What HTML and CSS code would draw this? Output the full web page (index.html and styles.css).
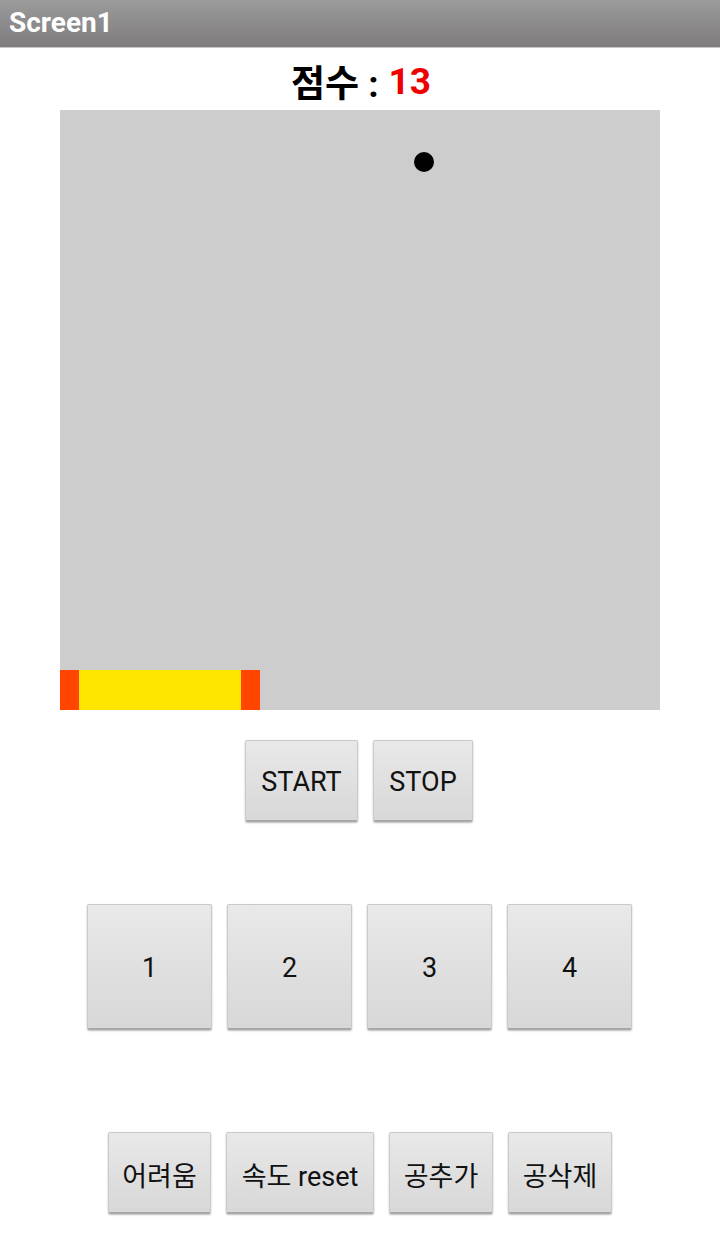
FILE: index.html
```html
<!DOCTYPE html>
<html lang="ko">
<head>
<meta charset="utf-8">
<link rel="stylesheet" href="styles.css">
</head>
<body>
<header class="titlebar"><span class="title">Screen1</span></header>
<main class="screen">
  <div class="score">점수 : <span class="score-num">13</span></div>
  <div class="canvas">
    <div class="ball"></div>
    <div class="paddle"><span class="pend"></span><span class="pmid"></span><span class="pend"></span></div>
  </div>
  <div class="row row-ctrl">
    <button class="btn btn-start">START</button>
    <button class="btn btn-stop">STOP</button>
  </div>
  <div class="row row-num">
    <button class="btn btn-num">1</button>
    <button class="btn btn-num">2</button>
    <button class="btn btn-num">3</button>
    <button class="btn btn-num">4</button>
  </div>
  <div class="row row-opt">
    <button class="btn btn-hard">어려움</button>
    <button class="btn btn-reset">속도 reset</button>
    <button class="btn btn-add">공추가</button>
    <button class="btn btn-del">공삭제</button>
  </div>
</main>
</body>
</html>
```
FILE: styles.css
```css
* { box-sizing: border-box; }
html, body { margin: 0; padding: 0; }
body {
  width: 720px;
  height: 1250px;
  background: #ffffff;
  font-family: Roboto, "Noto Sans CJK KR", sans-serif;
  overflow: hidden;
}
.titlebar {
  height: 48px;
  background: linear-gradient(#9c9b9b, #7e7c7c);
  display: flex;
  align-items: center;
  padding-left: 9px;
  border-bottom: 1px solid #c8c8c8;
}
.title {
  color: #ffffff;
  font-weight: 700;
  font-size: 28px;
  font-family: Roboto, sans-serif;
  margin-top: -2px;
}
.screen {
  display: flex;
  flex-direction: column;
  align-items: center;
}
.score {
  height: 62px;
  display: flex;
  align-items: center;
  justify-content: center;
  font-size: 37px;
  font-weight: 700;
  color: #000;
  font-family: Roboto, "Noto Sans CJK KR", sans-serif;
  padding-left: 2px;
  padding-top: 4px;
}
.score-num { color: #ee0000; margin-left: 10px; }
.canvas {
  position: relative;
  width: 600px;
  height: 600px;
  background: #cdcdcd;
}
.ball {
  position: absolute;
  left: 354px;
  top: 42px;
  width: 20px;
  height: 20px;
  border-radius: 50%;
  background: #000;
}
.paddle {
  position: absolute;
  left: 0;
  bottom: 0;
  width: 200px;
  height: 40px;
  display: flex;
}
.pend { width: 19px; background: #ff4500; }
.pmid { flex: 1; background: #ffe600; }
.row {
  display: flex;
  justify-content: center;
  gap: 15px;
}
.row-ctrl { margin-top: 30px; padding-right: 2px; }
.row-num { margin-top: 82px; padding-right: 1px; }
.row-opt { margin-top: 102px; }
.btn {
  font-family: Roboto, "Noto Sans CJK KR", sans-serif;
  font-size: 27px;
  color: #111111;
  background: linear-gradient(#e9e9e9, #dedede 60%, #d8d8d8);
  border: 1px solid #c9c9c9;
  border-bottom: 2px solid #a8a8a8;
  border-radius: 2px;
  box-shadow: 0 1px 2px rgba(0,0,0,0.25);
  padding: 3px 0 0 0;
  display: flex;
  align-items: center;
  justify-content: center;
}
.btn-start { width: 113px; height: 82px; }
.btn-stop { width: 100px; height: 82px; }
.btn-num { width: 125px; height: 126px; }
.btn-hard { width: 103px; height: 82px; }
.btn-reset { width: 148px; height: 82px; }
.btn-add { width: 104px; height: 82px; }
.btn-del { width: 104px; height: 82px; }
```
